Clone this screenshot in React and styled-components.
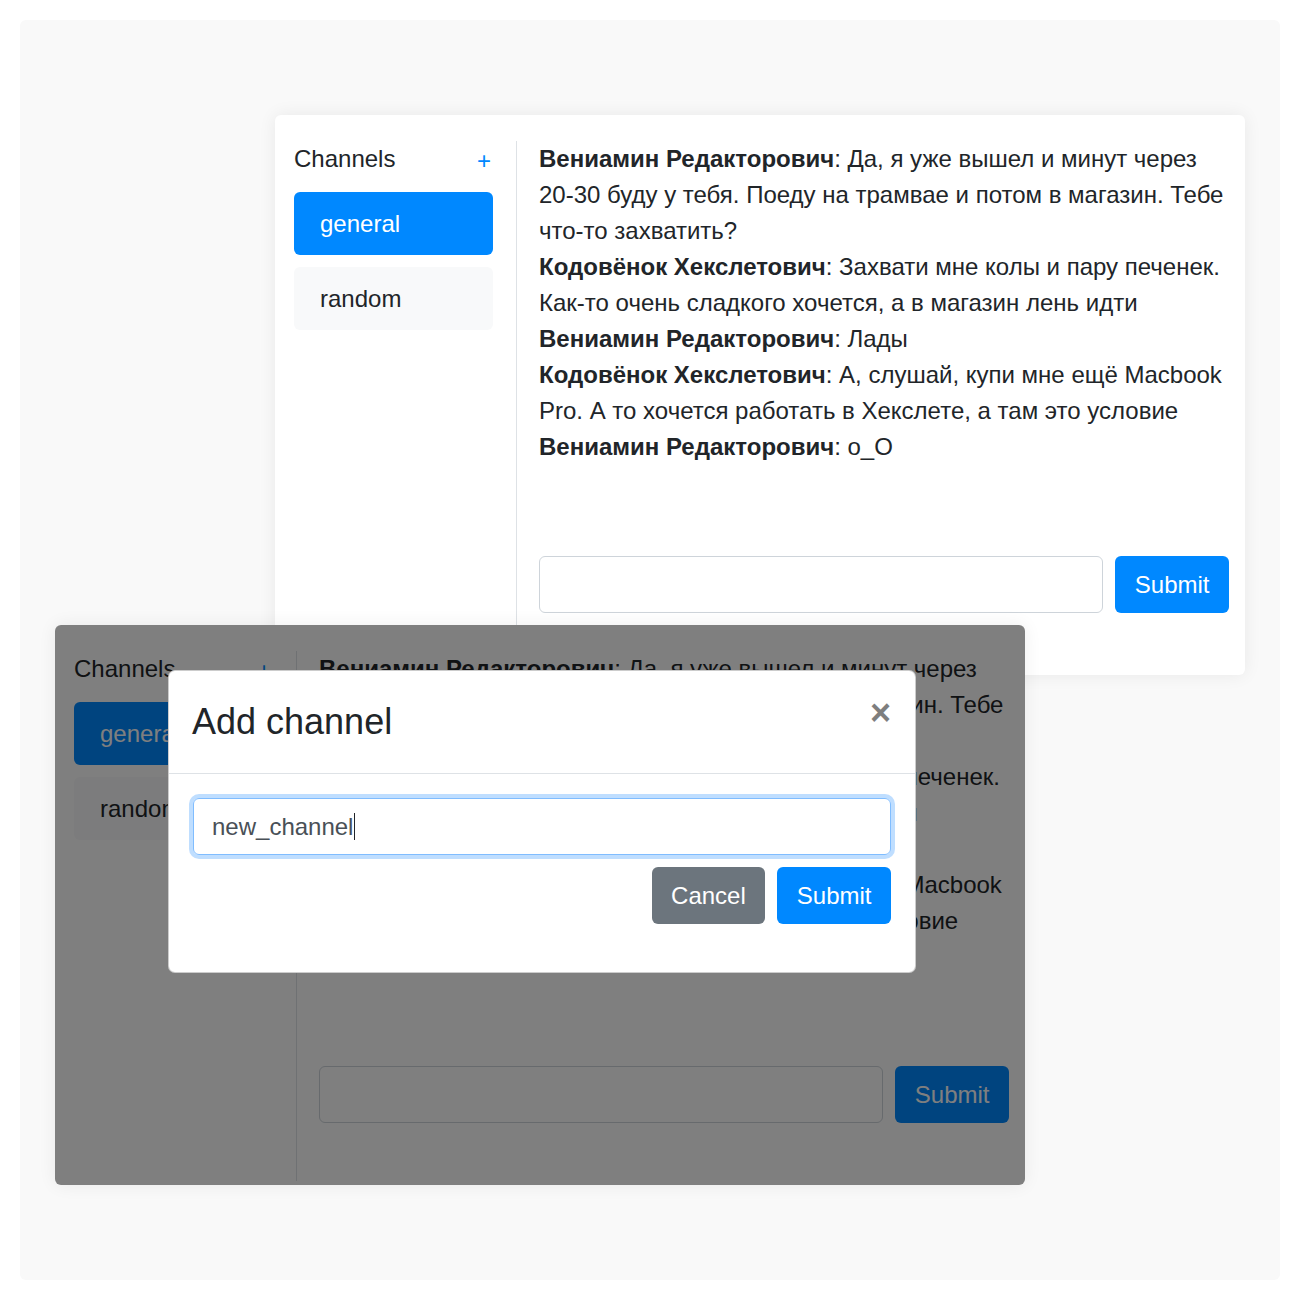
import React from "react";
import styled, { createGlobalStyle } from "styled-components";

const Global = createGlobalStyle`
  html, body { margin: 0; padding: 0; background: #ffffff; }
  body { font-family: "Liberation Sans", Arial, Helvetica, sans-serif; color: #212529; }
  * { box-sizing: border-box; }
`;

const Stage = styled.div`
  position: relative;
  margin: 20px;
  width: 1260px;
  height: 1260px;
  background: #f9f9f9;
  border-radius: 6px;
`;

const Window = styled.div`
  position: absolute;
  left: ${(p) => p.$x}px;
  top: ${(p) => p.$y}px;
  width: 970px;
  height: 560px;
  border-radius: 6px;
  overflow: hidden;
  background: #ffffff;
  box-shadow: 0 0 18px rgba(0, 0, 0, 0.07);
`;

const Card = styled.div`
  display: flex;
  height: 100%;
  padding: 26px 16px 4px 0;
  font-size: 24px;
  line-height: 36px;
`;

const Sidebar = styled.div`
  flex: 0 0 242px;
  padding: 0 23px 0 19px;
  border-right: 1px solid #dee2e6;
  display: flex;
  flex-direction: column;
`;

const SideHeader = styled.div`
  display: flex;
  justify-content: space-between;
  align-items: flex-start;
  margin-bottom: 13px;
`;

const SideTitle = styled.span``;

const PlusBtn = styled.span`
  color: #0088ff;
  margin-top: 2px;
  margin-right: 2px;
`;

const ChannelBtn = styled.div`
  height: 63px;
  display: flex;
  align-items: center;
  padding: 0 24px 0 26px;
  border-radius: 6px;
  margin-bottom: 12px;
  background: ${(p) => (p.$active ? "#0088ff" : "#f8f9fa")};
  color: ${(p) => (p.$active ? "#ffffff" : "#212529")};
`;

const Main = styled.div`
  flex: 1;
  padding-left: 22px;
  display: flex;
  flex-direction: column;
`;

const Messages = styled.div`
  flex: 1;
`;

const Message = styled.div``;

const Form = styled.div`
  display: flex;
  gap: 12px;
  margin-bottom: 58px;
`;

const TextInput = styled.input`
  flex: 1;
  height: 57px;
  border: 1px solid #ced4da;
  border-radius: 6px;
  padding: 0 18px;
  font: inherit;
  color: #495057;
  background: #fff;
  outline: none;
`;

const Button = styled.button`
  height: 57px;
  padding: 0 19.5px;
  border: none;
  border-radius: 6px;
  font-family: "Liberation Sans", Arial, sans-serif;
  font-size: 24px;
  line-height: 36px;
  color: #ffffff;
  background: ${(p) => (p.$variant === "secondary" ? "#6c757d" : "#0088ff")};
  cursor: pointer;
`;

const Backdrop = styled.div`
  position: absolute;
  inset: 0;
  background: rgba(0, 0, 0, 0.5);
`;

const Modal = styled.div`
  position: absolute;
  left: 113px;
  top: 45px;
  width: 748px;
  background: #ffffff;
  border: 1px solid rgba(0, 0, 0, 0.2);
  border-radius: 7px;
  font-size: 24px;
  line-height: 36px;
`;

const ModalHeader = styled.div`
  display: flex;
  justify-content: space-between;
  align-items: flex-start;
  padding: 24px 24px 24px 23px;
  border-bottom: 1px solid #dee2e6;
`;

const ModalTitle = styled.h4`
  margin: 0;
  font-size: 36px;
  line-height: 54px;
  font-weight: 400;
  color: #212529;
`;

const Close = styled.span`
  font-size: 36px;
  line-height: 1;
  font-weight: 700;
  color: #000;
  opacity: 0.5;
`;

const ModalBody = styled.div`
  padding: 24px 24px 48px;
  display: flex;
  flex-direction: column;
`;

const FocusedInput = styled.div`
  height: 57px;
  border: 1px solid #80bdff;
  border-radius: 6px;
  box-shadow: 0 0 0 4px rgba(0, 123, 255, 0.25);
  padding: 0 18px;
  display: flex;
  align-items: center;
  color: #495057;
`;

const Caret = styled.span`
  display: inline-block;
  width: 1px;
  height: 27px;
  margin-left: 1px;
  background: #212529;
`;

const Actions = styled.div`
  display: flex;
  justify-content: flex-end;
  gap: 12px;
  margin-top: 12px;
`;

const messages = [
  ["Вениамин Редакторович", "Да, я уже вышел и минут через 20-30 буду у тебя. Поеду на трамвае и потом в магазин. Тебе что-то захватить?"],
  ["Кодовёнок Хекслетович", "Захвати мне колы и пару печенек. Как-то очень сладкого хочется, а в магазин лень идти"],
  ["Вениамин Редакторович", "Лады"],
  ["Кодовёнок Хекслетович", "А, слушай, купи мне ещё Macbook Pro. А то хочется работать в Хекслете, а там это условие"],
  ["Вениамин Редакторович", "о_О"],
];

const Chat = () => (
  <Card>
    <Sidebar>
      <SideHeader>
        <SideTitle>Channels</SideTitle>
        <PlusBtn>+</PlusBtn>
      </SideHeader>
      <ChannelBtn $active>general</ChannelBtn>
      <ChannelBtn>random</ChannelBtn>
    </Sidebar>
    <Main>
      <Messages>
        {messages.map(([name, text], i) => (
          <Message key={i}>
            <b>{name}</b>: {text}
          </Message>
        ))}
      </Messages>
      <Form>
        <TextInput type="text" />
        <Button>Submit</Button>
      </Form>
    </Main>
  </Card>
);

export default function App() {
  return (
    <>
      <Global />
      <Stage>
        <Window $x={255} $y={95}>
          <Chat />
        </Window>
        <Window $x={35} $y={605}>
          <Chat />
          <Backdrop />
          <Modal>
            <ModalHeader>
              <ModalTitle>Add channel</ModalTitle>
              <Close>×</Close>
            </ModalHeader>
            <ModalBody>
              <FocusedInput>
                new_channel
                <Caret />
              </FocusedInput>
              <Actions>
                <Button $variant="secondary">Cancel</Button>
                <Button>Submit</Button>
              </Actions>
            </ModalBody>
          </Modal>
        </Window>
      </Stage>
    </>
  );
}
